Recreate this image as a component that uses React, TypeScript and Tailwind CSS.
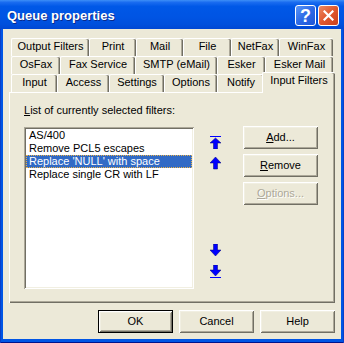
import React from "react";

type TabDef = { label: string; w: string };

const row1: TabDef[] = [
  { label: "Output Filters", w: "w-[78px]" },
  { label: "Print", w: "w-[47px]" },
  { label: "Mail", w: "w-[47px]" },
  { label: "File", w: "w-[48px]" },
  { label: "NetFax", w: "w-[48px]" },
  { label: "WinFax", w: "w-[54px]" },
];
const row2: TabDef[] = [
  { label: "OsFax", w: "w-[49px]" },
  { label: "Fax Service", w: "w-[75px]" },
  { label: "SMTP (eMail)", w: "w-[82px]" },
  { label: "Esker", w: "w-[48px]" },
  { label: "Esker Mail", w: "w-[68px]" },
];
const row3: TabDef[] = [
  { label: "Input", w: "w-[46px]" },
  { label: "Access", w: "w-[52px]" },
  { label: "Settings", w: "w-[55px]" },
  { label: "Options", w: "w-[53px]" },
  { label: "Notify", w: "w-[47px]" },
];

function Tab({ label, w }: TabDef) {
  return (
    <div
      className={`${w} h-[18px] shrink-0 flex justify-center pt-[1px] border-l border-t border-white rounded-t-[2px] bg-[#ece9d8] shadow-[inset_-1px_0_0_#716f64,inset_-2px_0_0_#aca899] whitespace-nowrap`}
    >
      {label}
    </div>
  );
}

function TabRow({ tabs, children }: { tabs: TabDef[]; children?: React.ReactNode }) {
  return (
    <div className="flex h-[18px]">
      {tabs.map((t) => (
        <Tab key={t.label} {...t} />
      ))}
      {children}
    </div>
  );
}

const btnBase =
  "w-[75px] h-[23px] shrink-0 flex items-center justify-center bg-[#ece9d8]";
const btnShadow =
  "shadow-[inset_1px_1px_0_#ffffff,inset_-1px_-1px_0_#716f64,inset_2px_2px_0_#f1efe2,inset_-2px_-2px_0_#aca899]";

function Btn({
  children,
  def,
  disabled,
}: {
  children: React.ReactNode;
  def?: boolean;
  disabled?: boolean;
}) {
  return (
    <div
      className={`${btnBase} ${btnShadow} ${def ? "border border-black" : ""} ${
        disabled ? "text-[#aca899] [text-shadow:1px_1px_0_#ffffff]" : "text-black"
      }`}
    >
      {children}
    </div>
  );
}

function ArrowUp({ bar }: { bar?: boolean }) {
  return (
    <svg width="11" height="13" viewBox="0 0 11 13">
      {bar && <rect x="0" y="0" width="11" height="1" fill="#0000ff" />}
      <polygon
        points={
          bar
            ? "5.5,2 11,7 7.5,7 7.5,13 3.5,13 3.5,7 0,7"
            : "5.5,0 11,6 7.5,6 7.5,12 3.5,12 3.5,6 0,6"
        }
        fill="#0000ff"
        stroke="#00007a"
        strokeWidth="0.5"
      />
    </svg>
  );
}

function ArrowDown({ bar }: { bar?: boolean }) {
  return (
    <svg width="11" height="13" viewBox="0 0 11 13">
      {bar && <rect x="0" y="12" width="11" height="1" fill="#0000ff" />}
      <polygon
        points={
          bar
            ? "3.5,0 7.5,0 7.5,5 11,5 5.5,11 0,5 3.5,5"
            : "3.5,0 7.5,0 7.5,6 11,6 5.5,12 0,6 3.5,6"
        }
        fill="#0000ff"
        stroke="#00007a"
        strokeWidth="0.5"
      />
    </svg>
  );
}

const items = [
  "AS/400",
  "Remove PCL5 escapes",
  "Replace 'NULL' with space",
  "Replace single CR with LF",
];

export default function App() {
  return (
    <div className="w-[344px] h-[343px] flex flex-col bg-[#0055e5] shadow-[inset_1px_0_0_#0a3fc8,inset_-1px_0_0_#0a3fc8,inset_0_-1px_0_#00138c] font-['Liberation_Sans',Arial,sans-serif] text-[11px] leading-[13px] text-black overflow-hidden">
      {/* Title bar */}
      <div className="h-[29px] shrink-0 flex items-start pl-[7px] pr-[5px] bg-[linear-gradient(to_bottom,#3d8ff7_0%,#1a6cf0_8%,#0058e7_22%,#0054e3_60%,#004fdc_85%,#0047d3_100%)]">
        <span className="flex-1 pt-[8px] font-bold text-[13px] leading-[15px] text-white [text-shadow:1px_1px_0_#0a2a8a] whitespace-nowrap">
          Queue properties
        </span>
        <div className="mt-[5px] w-[21px] h-[21px] rounded-[3px] border border-white bg-[linear-gradient(to_bottom_right,#5a96f8,#2d6ae6_50%,#1e55d6)] flex items-center justify-center text-white font-bold text-[18px] leading-[18px]">
          ?
        </div>
        <div className="mt-[5px] ml-[2px] w-[21px] h-[21px] rounded-[3px] border border-white bg-[linear-gradient(to_bottom_right,#ec8a64,#e0582e_50%,#c9401c)] flex items-center justify-center">
          <svg width="11" height="11" viewBox="0 0 11 11">
            <path d="M1.5 1.5 L9.5 9.5 M9.5 1.5 L1.5 9.5" stroke="#ffffff" strokeWidth="2.2" strokeLinecap="square" />
          </svg>
        </div>
      </div>

      {/* Client area */}
      <div className="flex-1 mx-[3px] mb-[4px] bg-[#ece9d8] flex flex-col pt-[9px] px-[6px]">
        {/* Tabs */}
        <div className="flex flex-col pl-[2px]">
          <TabRow tabs={row1} />
          <TabRow tabs={row2} />
          <TabRow tabs={row3}>
            <div className="relative z-10 w-[73px] h-[21px] shrink-0 -mt-[2px] -mx-[2px] flex justify-center pt-[1px] border-l border-t border-white rounded-t-[2px] bg-[#ece9d8] shadow-[inset_-1px_0_0_#716f64,inset_-2px_0_0_#aca899] whitespace-nowrap">
              Input Filters
            </div>
          </TabRow>
        </div>

        {/* Panel */}
        <div className="w-[326px] h-[211px] border-l border-t border-white shadow-[inset_-1px_-1px_0_#716f64,inset_-2px_-2px_0_#aca899] pt-[11px] pl-[14px] flex flex-col">
          <div className="h-[13px] whitespace-nowrap">
            <span className="underline underline-offset-[1px]">L</span>ist of currently selected filters:
          </div>
          <div className="flex mt-[9px]">
            {/* Listbox */}
            <div className="w-[170px] h-[162px] mt-[1px] bg-white p-[2px] shadow-[inset_1px_1px_0_#aca899,inset_-1px_-1px_0_#ffffff,inset_2px_2px_0_#716f64,inset_-2px_-2px_0_#f1efe2]">
              {items.map((it, i) =>
                i === 2 ? (
                  <div
                    key={it}
                    className="h-[13px] pl-[3px] bg-[#316ac5] text-white whitespace-nowrap outline-1 outline-dotted outline-[#e9b24a] -outline-offset-1"
                  >
                    {it}
                  </div>
                ) : (
                  <div key={it} className="h-[13px] pl-[3px] whitespace-nowrap">
                    {it}
                  </div>
                )
              )}
            </div>

            {/* Arrows */}
            <div className="ml-[16px] w-[11px] flex flex-col">
              <div className="mt-[10px] h-[13px]">
                <ArrowUp bar />
              </div>
              <div className="mt-[8px] h-[13px]">
                <ArrowUp />
              </div>
              <div className="mt-[74px] h-[13px]">
                <ArrowDown />
              </div>
              <div className="mt-[8px] h-[13px]">
                <ArrowDown bar />
              </div>
            </div>

            {/* Buttons */}
            <div className="ml-[22px] flex flex-col gap-[5px]">
              <Btn>
                <span className="underline underline-offset-[1px]">A</span>dd...
              </Btn>
              <Btn>
                <span className="underline underline-offset-[1px]">R</span>emove
              </Btn>
              <Btn disabled>
                <span className="underline underline-offset-[1px]">O</span>ptions...
              </Btn>
            </div>
          </div>
        </div>

        {/* Bottom buttons */}
        <div className="mt-[7px] flex justify-end gap-[6px]">
          <Btn def>OK</Btn>
          <Btn>Cancel</Btn>
          <Btn>Help</Btn>
        </div>
      </div>
    </div>
  );
}
